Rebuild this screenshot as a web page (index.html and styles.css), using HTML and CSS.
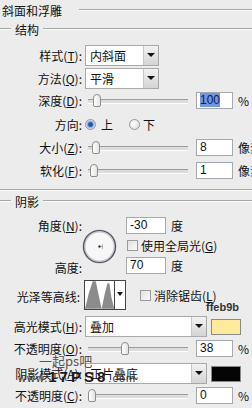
FILE: index.html
```html
<!DOCTYPE html>
<html lang="zh-CN">
  <head>
    <meta charset="UTF-8" />
    <meta name="viewport" content="width=device-width, initial-scale=1.0" />
    <title>斜面和浮雕</title>
    <link rel="stylesheet" href="styles.css">
  </head>
  <body>
    <div class="panel">
      <div class="title"><span>斜面和浮雕</span><i class="rule"></i></div>
      <div class="legend"><i class="rule lead"></i><span>结构</span><i class="rule"></i></div>

      <div class="row r-style">
        <label class="lbl">样式(<u>T</u>):</label>
        <div class="select narrow"><span>内斜面</span><b class="drop"></b></div>
      </div>
      <div class="row r-method">
        <label class="lbl">方法(<u>Q</u>):</label>
        <div class="select narrow"><span>平滑</span><b class="drop"></b></div>
      </div>
      <div class="row r-slide">
        <label class="lbl">深度(<u>D</u>):</label>
        <div class="slider"><i class="thumb" style="left: 5px"></i></div>
        <div class="num"><em class="sel">100</em></div>
        <span class="unit">%</span>
      </div>
      <div class="row r-dir">
        <label class="lbl">方向:</label>
        <i class="radio on"></i><span class="opt">上</span>
        <i class="radio second"></i><span class="opt-b">下</span>
      </div>
      <div class="row r-slide">
        <label class="lbl">大小(<u>Z</u>):</label>
        <div class="slider"><i class="thumb" style="left: 4px"></i></div>
        <div class="num">8</div>
        <span class="unit">像素</span>
      </div>
      <div class="row r-slide">
        <label class="lbl">软化(<u>F</u>):</label>
        <div class="slider"><i class="thumb" style="left: 2px"></i></div>
        <div class="num">1</div>
        <span class="unit">像素</span>
      </div>

      <div class="sep"></div>
      <div class="legend shadow"><i class="rule lead"></i><span>阴影</span><i class="rule"></i></div>

      <div class="angle">
        <label class="lbl">角度(<u>N</u>):</label>
        <svg class="dial" width="35" height="35" viewBox="0 0 35 35">
          <circle cx="17.5" cy="17.5" r="15.5" fill="#f7f7f7" stroke="#c3c6cc" stroke-width="3"/>
          <circle cx="17.5" cy="17.5" r="16" fill="none" stroke="#4f525a" stroke-width="1.2"/>
          <rect x="16.5" y="16.5" width="2" height="2" fill="#111"/>
          <rect x="19.5" y="17" width="1" height="1" fill="#444"/>
          <rect x="20" y="15.5" width="1" height="1" fill="#777"/>
          <rect x="20" y="18.5" width="1" height="1" fill="#777"/>
        </svg>
        <div class="cell">
          <div class="num wide">-30</div><span class="unit">度</span>
        </div>
        <div class="cell">
          <i class="check"></i><span class="check-text">使用全局光(<u>G</u>)</span>
        </div>
        <label class="lbl">高度:</label>
        <div class="cell">
          <div class="num wide">70</div><span class="unit">度</span>
        </div>
      </div>

      <div class="row r-contour">
        <label class="lbl contour-lbl">光泽等高线:</label>
        <div class="contour">
          <svg width="30" height="28" viewBox="0 0 30 28">
            <rect width="30" height="28" fill="#fff"/>
            <path d="M0,28 L4,12 L8,0 L11,0 L14,14 L17,28 Z" fill="#8c8c8c"/>
            <path d="M17,28 L20,14 L23,2 L25,2 L27,16 L30,28 Z" fill="#8c8c8c"/>
          </svg>
          <b class="drop"></b>
        </div>
        <i class="check aa"></i><span class="check-text">消除锯齿(<u>L</u>)</span>
      </div>

      <div class="row r-mode">
        <label class="lbl">高光模式(<u>H</u>):</label>
        <div class="select long"><span>叠加</span><b class="drop"></b></div>
        <i class="swatch light"></i>
      </div>
      <div class="row r-slide r-op">
        <label class="lbl">不透明度(<u>O</u>):</label>
        <div class="slider"><i class="thumb" style="left: 33px"></i></div>
        <div class="num">38</div>
        <span class="unit">%</span>
      </div>
      <div class="row r-mode r-shadow">
        <label class="lbl">阴影模式(<u>A</u>):</label>
        <div class="select long"><span>正片叠底</span><b class="drop"></b></div>
        <i class="swatch dark"></i>
      </div>
      <div class="row r-slide r-op">
        <label class="lbl">不透明度(<u>C</u>):</label>
        <div class="slider"><i class="thumb" style="left: 0px"></i></div>
        <div class="num">0</div>
        <span class="unit">%</span>
      </div>

      <div class="hex">ffeb9b</div>
      <div class="mark">
        <span class="mark-top">一起ps吧</span>
        <span class="mark-url">www.<b>17PS8</b>.com</span>
      </div>
    </div>
  </body>
</html>
```

FILE: styles.css
```css
* {
  box-sizing: border-box;
}

body {
  margin: 0;
  width: 252px;
  height: 408px;
  overflow: hidden;
  background: #ececec;
  font: 12px "Noto Sans CJK SC", "Liberation Sans", sans-serif;
  color: #111;
}

u {
  text-decoration: underline;
  text-underline-offset: 1px;
}

.panel {
  position: relative;
  width: 252px;
  height: 408px;
  overflow: hidden;
}

.title {
  display: flex;
  align-items: center;
  height: 20px;
}

.title span {
  padding-left: 2px;
  margin-right: 17px;
}

.rule {
  flex: 1;
  height: 2px;
  border-top: 1px solid #a6a6a6;
  border-bottom: 1px solid #fcfcfc;
}

.legend {
  display: flex;
  align-items: center;
  height: 18px;
}

.legend .lead {
  flex: 0 0 11px;
}

.legend span {
  margin: 0 4px 0 4px;
}

.legend.shadow {
  margin-top: 1px;
}

.sep {
  margin-top: 7px;
  height: 2px;
  border-top: 1px solid #a6a6a6;
  border-bottom: 1px solid #fcfcfc;
}

.row {
  display: flex;
  align-items: center;
}

.lbl {
  flex: none;
  width: 82px;
  text-align: right;
  white-space: nowrap;
}

.r-style {
  margin-top: 7px;
  height: 21px;
}

.r-method {
  margin-top: 2px;
  height: 21px;
}

.r-slide {
  height: 23px;
}

.r-dir {
  height: 24px;
}

/* dropdowns */
.select {
  display: flex;
  height: 21px;
  margin-left: 3px;
  background: #fff;
  border: 1px solid #a9a9a9;
}

.select span {
  flex: 1;
  padding-left: 4px;
  line-height: 19px;
  white-space: nowrap;
}

.select.narrow {
  width: 74px;
}

.select.long {
  width: 122px;
}

.drop {
  position: relative;
  width: 15px;
  background: linear-gradient(#f2f2f2, #d4d4d4);
  border-left: 1px solid #c9c9c9;
}

.drop::after {
  content: "";
  position: absolute;
  left: 3px;
  top: 7px;
  border-left: 4px solid transparent;
  border-right: 4px solid transparent;
  border-top: 4px solid #111;
}

/* sliders */
.slider {
  position: relative;
  flex: none;
  width: 100px;
  height: 13px;
  margin-left: 6px;
}

.slider::before {
  content: "";
  position: absolute;
  left: 0;
  right: 0;
  top: 5px;
  height: 3px;
  border-top: 1px solid #9c9c9c;
  border-bottom: 1px solid #fff;
  background: #dcdcdc;
}

.thumb {
  position: absolute;
  top: 0;
  width: 8px;
  height: 13px;
  border: 1px solid #8d8d8d;
  border-radius: 4px 4px 2px 2px;
  background: linear-gradient(90deg, #fff, #e4e4e4);
}

.num {
  flex: none;
  width: 37px;
  height: 17px;
  margin-left: 8px;
  padding-left: 3px;
  background: #fff;
  border: 1px solid #a4a9b0;
  font: 12px/15px "Liberation Sans", sans-serif;
}

.num.wide {
  width: 40px;
  margin-left: 0;
}

.sel {
  font-style: normal;
  background: #7395dc;
  color: #0c1d52;
}

.unit {
  margin-left: 5px;
  white-space: nowrap;
}

/* radio buttons */
.radio {
  width: 11px;
  height: 11px;
  border-radius: 50%;
  margin-left: 3px;
  border: 1px solid #8e99a8;
  background: radial-gradient(circle at 40% 40%, #ffffff, #d8d8d8);
}

.radio.on {
  background: radial-gradient(circle, #2a4f8c 0, #2f5fa8 2px, #8fb0e0 3px, #eef2f8 5px);
}

.radio.second {
  margin-left: 16px;
}

.opt {
  margin-left: 5px;
}

.opt-b {
  margin-left: 3px;
}

/* angle block */
.angle {
  display: grid;
  grid-template-columns: 82px 44px 1fr;
  grid-template-rows: 18px 22px 18px;
  align-items: center;
  margin-top: 6px;
}

.dial {
  grid-column: 2;
  grid-row: 1 / 4;
  margin-top: 2px;
}

.cell {
  display: flex;
  align-items: center;
  grid-column: 3;
}

.angle > .lbl {
  grid-column: 1;
}

.angle > .lbl:last-of-type {
  grid-row: 3;
  padding-top: 4px;
}

.check {
  flex: none;
  width: 11px;
  height: 11px;
  margin-left: 1px;
  border: 1px solid #9a9a9a;
  background: linear-gradient(135deg, #e2e2e2, #fbfbfb);
}

.check-text {
  margin-left: 3px;
  white-space: nowrap;
}

/* contour */
.r-contour {
  margin-top: 6px;
  height: 30px;
}

.contour-lbl {
  width: 80px;
  padding-top: 3px;
}

.contour {
  display: flex;
  width: 42px;
  height: 30px;
  margin-left: 4px;
  background: #fff;
  border: 1px solid #444;
}

.contour .drop {
  width: 11px;
  background: #fff;
  border-left: 1px solid #444;
}

.contour .drop::after {
  left: 2px;
  top: 11px;
  border-left-width: 3px;
  border-right-width: 3px;
}

.check.aa {
  margin-left: 14px;
}

/* blend modes */
.r-mode {
  margin-top: 6px;
  height: 21px;
}

.r-shadow {
  margin-top: 4px;
}

.r-op {
  height: 22px;
}

.swatch {
  flex: none;
  width: 30px;
  height: 16px;
  margin-left: 4px;
  border: 1px solid #8a8a8a;
}

.swatch.light {
  background: #ffe99c;
}

.swatch.dark {
  background: #050505;
}

/* overlays */
.hex {
  position: absolute;
  left: 206px;
  top: 301px;
  font: bold 11px "Liberation Sans", sans-serif;
  color: #333;
}

.mark {
  position: absolute;
  left: 18px;
  top: 354px;
  display: flex;
  flex-direction: column;
  line-height: 14px;
}

.mark-top {
  margin-left: 21px;
  font-size: 13px;
  color: #555;
}

.mark-url {
  font: 11px "Liberation Sans", sans-serif;
  color: #333;
  letter-spacing: 1px;
}

.mark-url b {
  font-size: 15px;
  letter-spacing: 3px;
  color: #1a1a1a;
}
```
